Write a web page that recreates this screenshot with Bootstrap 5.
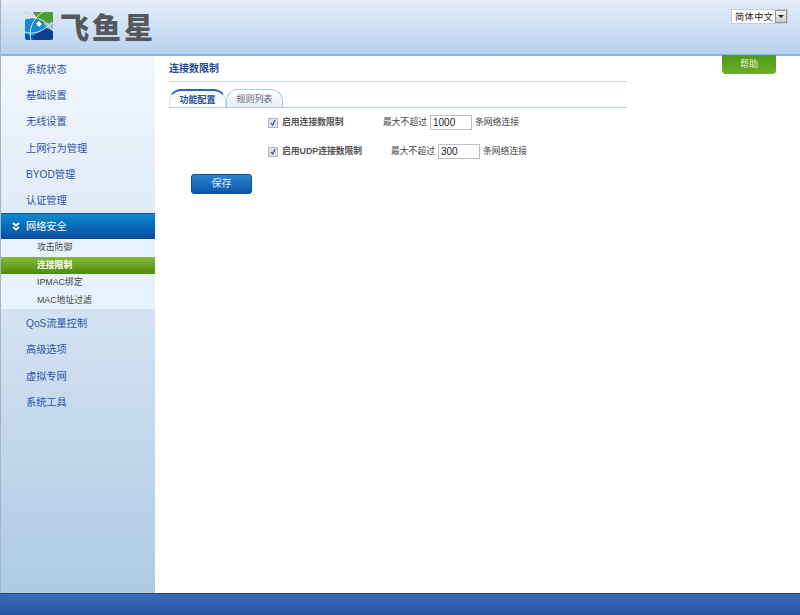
<!DOCTYPE html>
<html lang="zh">
<head>
  <meta charset="UTF-8" />
  <title>飞鱼星</title>
  <meta name="viewport" content="width=device-width, initial-scale=1" />
  <link href="https://cdn.jsdelivr.net/npm/bootstrap@5.3.3/dist/css/bootstrap.min.css" rel="stylesheet" />
  <style>
    html, body { height: 100%; }
    body {
      font-family: "Liberation Sans", "Noto Sans CJK SC", sans-serif;
      font-size: 8.8px;
      color: #444;
      overflow: hidden;
    }
    .page-wrap { height: 615px; border-left: 1px solid #a9b4bf; }
    .top-bar {
      height: 56px;
      flex: none;
      background: linear-gradient(#e4eef9, #b9d2ee);
      border-bottom: 2px solid #84b6ee;
      padding: 12px 12px 0 24px;
    }
    .logo-mark { width: 28px; height: 28px; }
    .logo-text {
      font-family: "Noto Sans CJK SC", sans-serif;
      font-weight: 900;
      font-size: 29px;
      letter-spacing: 3px;
      line-height: 28px;
      color: #55585c;
      margin-left: 7px;
    }
    .lang-wrap { position: relative; width: 57px; height: 15px; margin-top: -3px; }
    .lang-select {
      display: block;
      appearance: none;
      width: 100%;
      height: 15px;
      padding: 0 0 0 3px;
      font-size: 9.2px;
      letter-spacing: 0.4px;
      color: #222;
      background: #fff;
      border: 1px solid #c6ccd2;
      border-radius: 0;
      font-family: "Noto Sans CJK SC", sans-serif;
    }
    .lang-arrow {
      position: absolute;
      right: 1px;
      top: 1px;
      width: 12px;
      height: 13px;
      background: linear-gradient(#f4f4f4, #c9c9c9);
      border: 1px solid #8e959c;
      pointer-events: none;
    }
    .lang-arrow::after {
      content: "";
      position: absolute;
      left: 2px;
      top: 4px;
      border: 3px solid transparent;
      border-top: 3px solid #222;
      border-bottom: 0;
    }
    .mid-area { flex: 1; min-height: 0; }
    .side-nav {
      width: 154px;
      flex: none;
      padding-top: 1px;
      background: linear-gradient(#f2f7fd 0, #d5e4f3 45%, #aecae3 100%);
    }
    .side-link {
      display: block;
      height: 26.2px;
      line-height: 26.2px;
      padding-left: 25px;
      font-size: 10.2px;
      color: #2e55a8;
      text-decoration: none;
    }
    .side-link.is-open {
      height: 26px;
      line-height: 26px;
      margin-top: -1px;
      padding-left: 11px;
      color: #fff;
      background: linear-gradient(#0b8ad2, #0a4ba0);
      border-top: 1px solid #15508a;
    }
    .open-arrows { width: 8px; height: 9px; margin-right: 6px; }
    .sub-list { background: #e8f2fc; margin-bottom: 2px; }
    .sub-link {
      display: block;
      height: 17.5px;
      line-height: 17.5px;
      padding-left: 36px;
      color: #444;
      text-decoration: none;
    }
    .sub-link.is-on {
      color: #fff;
      font-weight: 700;
      background: linear-gradient(#84bb3c, #4e8b0b);
    }
    .main-pane { flex: 1; position: relative; padding: 0 0 0 14px; background: #fff; }
    .help-btn {
      position: absolute;
      left: 567px;
      top: -1px;
      width: 54px;
      height: 19px;
      padding: 0;
      font-size: 9px;
      line-height: 19px;
      color: #e8f5d8;
      background: linear-gradient(#4f9a14, #6fae2c);
      border: 0;
      border-radius: 0 0 4px 4px;
    }
    .pane-inner { width: 458px; }
    .pane-title {
      height: 26px;
      line-height: 26px;
      font-size: 10px;
      font-weight: 700;
      color: #1f4b96;
      border-bottom: 1px solid #c8d9ea;
      margin: 0;
    }
    .tab-row { margin-top: 7px; border-bottom: 1px solid #b5d0ec; height: 19px; }
    .tab-row .nav-link {
      height: 18px;
      width: 57px;
      padding: 0;
      margin: 0;
      text-align: center;
      font-size: 9px;
      line-height: 18px;
      color: #667;
      background: linear-gradient(#fff, #e4eefa);
      border: 1px solid #a9c9ec;
      border-bottom: 0;
      border-radius: 12px 12px 0 0;
    }
    .tab-row .nav-link.active {
      color: #24509a;
      font-weight: 700;
      background: linear-gradient(#eef5fd, #fff);
      border-top: 2px solid #2c66ad;
    }
    .form-line { padding-left: 99px; height: 29px; }
    .tick-box {
      appearance: none;
      flex: none;
      width: 10px;
      height: 10px;
      margin: 0 4px 0 0;
      border: 1px solid #b5b8bd;
      background: #dcdfe3 url("data:image/svg+xml,%3Csvg xmlns='http://www.w3.org/2000/svg' viewBox='0 0 10 10'%3E%3Cpath d='M2.5 5l2 2.5L7.5 1.5' fill='none' stroke='%23283f8f' stroke-width='1.4'/%3E%3C/svg%3E") center/100% no-repeat;
    }
    .check-text { font-weight: 700; color: #555; width: 101px; }
    .check-text.wide-one { width: 109px; }
    .num-input {
      width: 42px;
      height: 15px;
      margin: 0 3px;
      padding: 0 2px;
      font-size: 10px;
      color: #222;
      border: 1px solid #b9c0c8;
      border-radius: 0;
      font-family: "Liberation Sans", sans-serif;
    }
    .save-btn {
      display: block;
      margin: 8px 0 0 22px;
      width: 61px;
      height: 20px;
      padding: 0;
      font-size: 10px;
      line-height: 18px;
      color: #dcecfb;
      background: linear-gradient(#2a86d4, #0f55a8);
      border: 1px solid #0f4f9a;
      border-radius: 3px;
    }
    .bottom-bar {
      height: 22px;
      flex: none;
      margin-left: -1px;
      background: linear-gradient(#3a6bbb, #2a55a3);
      border-top: 1px solid #24477f;
    }
  </style>
</head>
<body>
  <div class="page-wrap d-flex flex-column">
    <div class="top-bar d-flex justify-content-between align-items-start">
      <div class="d-flex align-items-center">
        <svg class="logo-mark" viewBox="0 0 28 28">
          <rect width="28" height="28" rx="2" fill="#0c55a6"/>
          <path d="M8 0H26Q28 0 28 2V10L18 11 12 6z" fill="#4f9d2f"/>
          <path d="M0 2Q0 0 2 0H8L12 6 0 7z" fill="#cfe3e6"/>
          <path d="M18 11L28 10V19L21 16z" fill="#8fb9c8"/>
          <path d="M0 7L12 6 18 11 21 16 8 24 0 22z" fill="#1686d6"/>
          <path d="M21 16L28 19V26Q28 28 26 28H10L8 24z" fill="#0f3f8f"/>
          <path d="M11 11.5L14 9l3 3-3 3z" fill="#fff"/>
          <path d="M0 7C9 4 20 6 28 19M6 28C3 18 8 6 18 0M0 20C8 23 18 20 28 10" fill="none" stroke="#eef5f8" stroke-width="0.9"/>
        </svg>
        <span class="logo-text">飞鱼星</span>
      </div>
      <div class="lang-wrap">
        <select class="lang-select"><option>简体中文</option></select>
        <span class="lang-arrow"></span>
      </div>
    </div>
    <div class="mid-area d-flex">
      <nav class="side-nav">
        <a class="side-link" href="#">系统状态</a>
        <a class="side-link" href="#">基础设置</a>
        <a class="side-link" href="#">无线设置</a>
        <a class="side-link" href="#">上网行为管理</a>
        <a class="side-link" href="#">BYOD管理</a>
        <a class="side-link" href="#">认证管理</a>
        <a class="side-link is-open d-flex align-items-center" href="#">
          <svg class="open-arrows" viewBox="0 0 8 9"><path d="M1 1l3 2.5L7 1M1 5l3 2.5L7 5" fill="none" stroke="#fff" stroke-width="1.8"/></svg>网络安全
        </a>
        <div class="sub-list">
          <a class="sub-link" href="#">攻击防御</a>
          <a class="sub-link is-on" href="#">连接限制</a>
          <a class="sub-link" href="#">IPMAC绑定</a>
          <a class="sub-link" href="#">MAC地址过滤</a>
        </div>
        <a class="side-link" href="#">QoS流量控制</a>
        <a class="side-link" href="#">高级选项</a>
        <a class="side-link" href="#">虚拟专网</a>
        <a class="side-link" href="#">系统工具</a>
      </nav>
      <main class="main-pane">
        <button class="btn help-btn" type="button">帮助</button>
        <div class="pane-inner">
          <h1 class="pane-title">连接数限制</h1>
          <ul class="nav nav-tabs tab-row">
            <li class="nav-item"><a class="nav-link active" href="#">功能配置</a></li>
            <li class="nav-item"><a class="nav-link" href="#">规则列表</a></li>
          </ul>
          <div class="form-line d-flex align-items-center">
            <input class="tick-box" type="checkbox" checked />
            <span class="check-text">启用连接数限制</span>
            <span>最大不超过</span>
            <input class="num-input" type="text" value="1000" />
            <span>条网络连接</span>
          </div>
          <div class="form-line d-flex align-items-center">
            <input class="tick-box" type="checkbox" checked />
            <span class="check-text wide-one">启用UDP连接数限制</span>
            <span>最大不超过</span>
            <input class="num-input" type="text" value="300" />
            <span>条网络连接</span>
          </div>
          <button class="btn save-btn" type="button">保存</button>
        </div>
      </main>
    </div>
    <div class="bottom-bar"></div>
  </div>
  <script src="https://cdn.jsdelivr.net/npm/bootstrap@5.3.3/dist/js/bootstrap.bundle.min.js"></script>
</body>
</html>
